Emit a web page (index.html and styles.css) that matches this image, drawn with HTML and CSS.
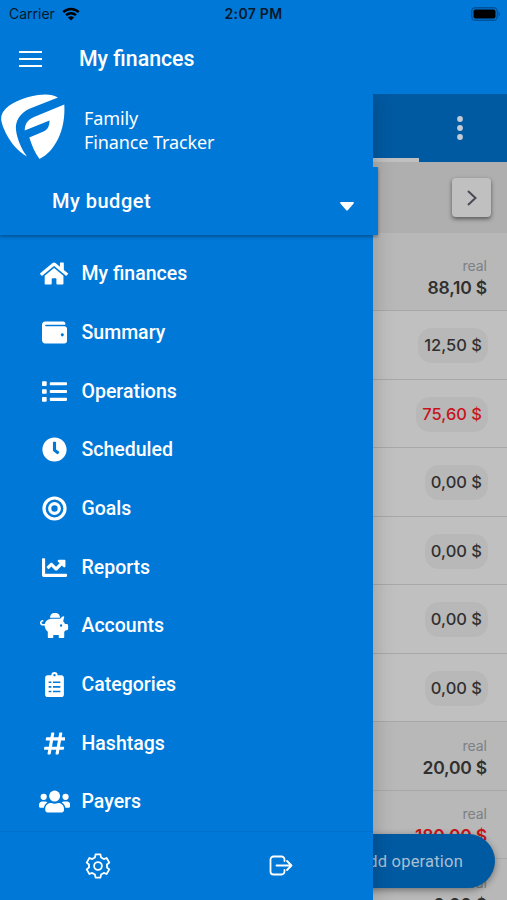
FILE: index.html
```html
<!DOCTYPE html>
<html lang="en">
<head>
  <meta charset="UTF-8" />
  <meta name="viewport" content="width=device-width, initial-scale=1.0"/>
  <title>My finances</title>
  <link rel="stylesheet" href="styles.css">
</head>
<body>
  <div class="status-bar">
    <div class="carrier">
      <span>Carrier</span>
      <svg class="wifi" viewBox="0 0 18 14"><path d="M1.3 5.2a10.8 10.8 0 0 1 15.4 0M4.1 8.2a6.9 6.9 0 0 1 9.8 0" fill="none" stroke="currentColor" stroke-width="2.5"/><path d="M9 13.5L5.9 10.5a4.4 4.4 0 0 1 6.2 0z"/></svg>
    </div>
    <span class="time">2:07 PM</span>
    <svg class="battery" viewBox="0 0 30 14"><rect x=".7" y=".7" width="25.6" height="12.6" rx="3.8" fill="none" stroke="#00539b" stroke-width="1.4"/><rect x="2.5" y="2.5" width="22" height="9" rx="2"/><path d="M27.5 4.7c2 .7 2 3.9 0 4.6z" fill="#00539b"/></svg>
  </div>

  <header>
    <svg class="burger" viewBox="0 0 24 16"><path d="M1 1.5h23M1 8.500h23M1 15.500h23" transform="translate(0 -.5)" stroke="currentColor" stroke-width="2"/></svg>
    <h1>My finances</h1>
  </header>

  <main>
    <div class="page">
      <div class="tabs">
        <div class="tab active"></div>
        <svg class="more" viewBox="0 0 6 24"><circle cx="3" cy="3" r="2.9"/><circle cx="3" cy="12" r="2.9"/><circle cx="3" cy="21" r="2.9"/></svg>
      </div>
      <div class="period">
        <button class="next"><svg viewBox="0 0 12 18"><path d="M2 2l7.5 7L2 16" fill="none" stroke="currentColor" stroke-width="2"/></svg></button>
      </div>
      <div class="row total first"><span class="label">real</span><span class="sum">88,10 $</span></div>
      <div class="row"><span class="chip">12,50 $</span></div>
      <div class="row"><span class="chip negative">75,60 $</span></div>
      <div class="row"><span class="chip">0,00 $</span></div>
      <div class="row"><span class="chip">0,00 $</span></div>
      <div class="row"><span class="chip">0,00 $</span></div>
      <div class="row"><span class="chip">0,00 $</span></div>
      <div class="row total"><span class="label">real</span><span class="sum">20,00 $</span></div>
      <div class="row total"><span class="label">real</span><span class="sum negative">180,00 $</span></div>
      <div class="row total"><span class="label">real</span><span class="sum">0,00 $</span></div>
    </div>

    <button class="add">Add operation</button>

    <aside class="drawer">
      <div class="brand">
        <svg class="logo" viewBox="0 0 66 66"><path d="M58 3.500C53 0 45 0 38 1 24 3 9 9 3 18c-3 5-2 10 1 17 5 12 13 22 23 27.500C22 56 17 45 16 36c-1-9 4-17 14-21.500z"/><path d="M64.300 10.500L34 23c-7 3-9 7-9.300 13.500L49.500 26.500c0 6-2 9-6 11L29.300 43.500C32 52 35 59 39.500 65c8-4 14-11 18.500-20 5-10 7-22 6.300-34.500z"/></svg>
        <div class="brand-name">Family<br>Finance Tracker</div>
      </div>

      <div class="budget">
        <span>My budget</span>
        <svg class="caret" viewBox="0 0 14 9"><path d="M1 0h12c1 0 1.200 1 .6 1.600L8 8c-.6.700-1.400.700-2 0L.4 1.600C-.2 1 0 0 1 0z"/></svg>
      </div>

      <nav>
        <a class="item">
          <svg class="icon" viewBox="0 0 576 512"><path d="M280.37 148.26L96 300.11V464a16 16 0 0 0 16 16l112.06-.29a16 16 0 0 0 15.92-16V368a16 16 0 0 1 16-16h64a16 16 0 0 1 16 16v95.64a16 16 0 0 0 16 16.050L464 480a16 16 0 0 0 16-16V300L295.67 148.26a12.190 12.190 0 0 0-15.300 0zM571.600 251.470L488 182.560V44.050a12 12 0 0 0-12-12h-56a12 12 0 0 0-12 12v72.610L318.470 43a48 48 0 0 0-61 0L4.340 251.470a12 12 0 0 0-1.600 16.900l25.500 31A12 12 0 0 0 45.150 301l235.220-193.740a12.190 12.190 0 0 1 15.300 0L530.900 301a12 12 0 0 0 16.900-1.600l25.500-31a12 12 0 0 0-1.700-16.930z"/></svg>
          <span>My finances</span>
        </a>
        <a class="item">
          <svg class="icon" viewBox="0 0 512 512"><path d="M461.200 128H80c-8.840 0-16-7.160-16-16s7.160-16 16-16h384c8.840 0 16-7.160 16-16 0-26.510-21.490-48-48-48H64C28.650 32 0 60.650 0 96v320c0 35.350 28.650 64 64 64h397.200c28.020 0 50.800-21.530 50.800-48V176c0-26.470-22.780-48-50.800-48zM416 336c-17.670 0-32-14.330-32-32s14.330-32 32-32 32 14.330 32 32-14.330 32-32 32z"/></svg>
          <span>Summary</span>
        </a>
        <a class="item">
          <svg class="icon" viewBox="0 0 512 512"><rect y="48" width="96" height="96" rx="16"/><rect y="208" width="96" height="96" rx="16"/><rect y="368" width="96" height="96" rx="16"/><rect x="160" y="64" width="352" height="64" rx="16"/><rect x="160" y="224" width="352" height="64" rx="16"/><rect x="160" y="384" width="352" height="64" rx="16"/></svg>
          <span>Operations</span>
        </a>
        <a class="item">
          <svg class="icon" viewBox="0 0 512 512"><path d="M256 8C119 8 8 119 8 256s111 248 248 248 248-111 248-248S393 8 256 8zm92.490 313l-20 25a16 16 0 0 1-22.490 2.500l-67-49.720a40 40 0 0 1-15-31.230V112a16 16 0 0 1 16-16h32a16 16 0 0 1 16 16v144l58 42.500a16 16 0 0 1 2.490 22.500z"/></svg>
          <span>Scheduled</span>
        </a>
        <a class="item">
          <svg class="icon" viewBox="0 0 512 512"><g fill="none" stroke="currentColor" stroke-width="66"><circle cx="256" cy="256" r="215"/><circle cx="256" cy="256" r="98"/></g></svg>
          <span>Goals</span>
        </a>
        <a class="item">
          <svg class="icon" viewBox="0 0 512 512"><path d="M496 384H64V80c0-8.840-7.160-16-16-16H16C7.160 64 0 71.160 0 80v336c0 17.670 14.330 32 32 32h464c8.840 0 16-7.160 16-16v-32c0-8.840-7.160-16-16-16zM464 96H345.940c-21.380 0-32.090 25.850-16.970 40.970l32.400 32.400L288 242.750l-73.370-73.370c-12.500-12.500-32.760-12.500-45.250 0l-68.690 68.690c-6.250 6.250-6.250 16.380 0 22.630l22.620 22.620c6.250 6.250 16.380 6.250 22.630 0L192 237.250l73.370 73.370c12.500 12.500 32.760 12.500 45.250 0l96-96 32.400 32.400c15.120 15.120 40.970 4.410 40.970-16.970V112c.010-8.840-7.150-16-15.990-16z"/></svg>
          <span>Reports</span>
        </a>
        <a class="item">
          <svg class="icon" viewBox="0 0 576 512"><path fill-rule="evenodd" d="M203 86a105 105 0 0 1 208-2c1 6-3 12-9 12H212c-6 0-10-4-9-10zM544 224h-31c-10-22-23-38-39-54l22-90c2-9-4-16-15-16-26 0-52 33-68 52H256c-77 0-141 35-157 108H56c-15 0-27-14-23-30 3-11 14-18 25-18 6 0 10-3 10-8v-16c0-6-4-8-8-8-30 0-56 21-60 51-4 34 23 61 56 61h40c0 52 25 98 64 127v113c0 9 7 16 16 16h80c9 0 16-7 16-16v-48h112v48c0 9 7 16 16 16h80c9 0 16-7 16-16V383c12-9 22-19 31-31h17c18 0 32-14 32-32v-64c0-18-14-32-32-32zM432 232a24 24 0 1 1 0 48 24 24 0 0 1 0-48z"/></svg>
          <span>Accounts</span>
        </a>
        <a class="item">
          <svg class="icon" viewBox="0 0 512 512"><path fill-rule="evenodd" d="M400 64h-80a64 64 0 0 0-128 0h-80c-26 0-48 22-48 48v352c0 26 22 48 48 48h288c26 0 48-22 48-48V112c0-26-22-48-48-48zM256 40a24 24 0 1 1 0 48 24 24 0 0 1 0-48zM136 192h56v32h-56zM224 192h152v32H224zM136 288h56v32h-56zM224 288h152v32H224zM136 384h56v32h-56zM224 384h152v32H224z"/></svg>
          <span>Categories</span>
        </a>
        <a class="item">
          <svg class="icon" viewBox="0 0 448 512"><path d="M440.667 182.109l7.143-40c1.313-7.355-4.342-14.109-11.813-14.109h-74.810l14.623-81.891C377.123 38.754 371.468 32 363.997 32h-40.632a12 12 0 0 0-11.813 9.891L296.175 128H197.540l14.623-81.891C213.477 38.754 207.822 32 200.350 32h-40.632a12 12 0 0 0-11.813 9.891L132.528 128H53.432a12 12 0 0 0-11.813 9.891l-7.143 40C33.163 185.246 38.818 192 46.289 192h74.810L98.242 320H19.146a12 12 0 0 0-11.813 9.891l-7.143 40C-1.123 377.246 4.532 384 12.003 384h74.810L72.190 465.891C70.877 473.246 76.532 480 84.003 480h40.632a12 12 0 0 0 11.813-9.891L151.826 384h98.634l-14.623 81.891C234.523 473.246 240.178 480 247.650 480h40.632a12 12 0 0 0 11.813-9.891L315.472 384h79.096a12 12 0 0 0 11.813-9.891l7.143-40c1.313-7.355-4.342-14.109-11.813-14.109h-74.810l22.857-128h79.096a12 12 0 0 0 11.813-9.891zM261.889 320h-98.634l22.857-128h98.634l-22.857 128z"/></svg>
          <span>Hashtags</span>
        </a>
        <a class="item">
          <svg class="icon" viewBox="0 0 640 512"><circle cx="96" cy="160" r="64"/><circle cx="544" cy="160" r="64"/><circle cx="320" cy="144" r="112"/><path d="M64 256h64c18 0 34 7 45 19-40 22-68 61-74 109H32c-18 0-32-14-32-32v-32c0-35 29-64 64-64zM576 256h-64c-18 0-34 7-45 19 40 22 68 61 74 109h67c18 0 32-14 32-32v-32c0-35-29-64-64-64zM243 288h8c42 20 96 20 138 0h8c64 0 115 52 115 115v29c0 27-21 48-48 48H176c-27 0-48-21-48-48v-29c0-63 51-115 115-115z"/></svg>
          <span>Payers</span>
        </a>
      </nav>

      <div class="drawer-footer">
        <svg class="settings" viewBox="0 0 26 26"><g fill="none" stroke="currentColor" stroke-width="1.800" stroke-linejoin="round"><path d="M10.600 1.400h4.800l.7 3.100 2.700 1.600 2.800-1.100 2.700 4.600-2.300 1.900v3l2.300 1.900-2.700 4.600-2.800-1.100-2.700 1.600-.7 3.100h-4.800l-.7-3.100-2.700-1.600L4.400 21l-2.700-4.600L4 14.500v-3L1.700 9.600 4.400 5l2.800 1.100 2.700-1.600z"/><circle cx="13" cy="13" r="3.900"/></g></svg>
        <svg class="logout" viewBox="0 0 24 22"><path d="M15.500 6V4.500a3 3 0 0 0-3-3h-8a3 3 0 0 0-3 3v12a3 3 0 0 0 3 3h8a3 3 0 0 0 3-3V15M7.500 10.500h14.500M18 6l4.500 4.500L18 15" fill="none" stroke="currentColor" stroke-width="1.800" stroke-linecap="round" stroke-linejoin="round"/></svg>
      </div>
    </aside>
  </main>
</body>
</html>
```

FILE: styles.css
```css
* {
  box-sizing: border-box;
}

body {
  margin: 0;
  height: 900px;
  display: flex;
  flex-direction: column;
  overflow: hidden;
  font-family: Roboto, sans-serif;
  background: #0078d8;
  color: #fff;
}

svg {
  display: block;
  fill: currentColor;
  flex-shrink: 0;
}

button {
  border: none;
  padding: 0;
  font-family: inherit;
}

.status-bar {
  height: 27px;
  padding: 0 6px 0 9px;
  display: grid;
  grid-template-columns: 1fr auto 1fr;
  align-items: center;
  font-family: Inter, sans-serif;
  font-size: 14px;
  color: #06182b;
}

.carrier {
  display: flex;
  align-items: center;
  gap: 7px;
}

.wifi {
  width: 18px;
  height: 14px;
  color: #000;
}

.time {
  margin-right: 3px;
  font-weight: 600;
  font-size: 14px;
  letter-spacing: 0.3px;
}

.battery {
  width: 30px;
  height: 14px;
  justify-self: end;
  color: #000;
}

header {
  height: 67px;
  padding: 0 18px 4px;
  display: flex;
  align-items: center;
  gap: 37px;
}

header h1 {
  margin: 0;
  font-size: 21.3px;
  font-weight: 500;
}

.burger {
  width: 24px;
  height: 16px;
}

main {
  position: relative;
  flex: 1;
  min-height: 0;
}

.page {
  height: 100%;
  overflow: hidden;
  background: #c0c0c0;
}

.tabs {
  height: 68px;
  padding-right: 44px;
  display: flex;
  align-items: center;
  justify-content: space-between;
  background: #005aa2;
  color: #c3ccd4;
}

.tab {
  width: 419px;
  height: 100%;
}

.tab.active {
  border-bottom: 4px solid #c0c0c0;
}

.more {
  width: 6px;
  height: 24px;
}

.period {
  height: 71px;
  padding-right: 16px;
  display: flex;
  align-items: center;
  justify-content: flex-end;
  background: #afafaf;
}

.next {
  width: 39px;
  height: 39px;
  display: flex;
  align-items: center;
  justify-content: center;
  background: #c0c0c0;
  border-radius: 4px;
  box-shadow: 0 2px 4px rgba(0, 0, 0, 0.5);
  color: #4a4a55;
}

.next svg {
  width: 12px;
  height: 18px;
}

.row {
  height: 68.5px;
  padding: 2px 20px 0 0;
  display: flex;
  flex-direction: column;
  align-items: flex-end;
  justify-content: center;
  border-bottom: 1.5px solid #a8a8a8;
  font-family: Inter, sans-serif;
  color: #303030;
}

.row.total {
  background: #b8b8b8;
}

.row.first {
  height: 78px;
  padding-top: 11px;
}

.label {
  font-size: 14px;
  line-height: 21px;
  color: #7b8184;
}

.sum {
  font-size: 17.5px;
  font-weight: 600;
  line-height: 23px;
  letter-spacing: -0.2px;
}

.chip {
  height: 35px;
  margin-right: -1px;
  padding: 0 6px;
  border-radius: 14px;
  background: #b8b8b8;
  font-size: 16.5px;
  font-weight: 500;
  line-height: 35px;
}

.negative {
  color: #c7141c;
}

.add {
  position: absolute;
  right: 12px;
  bottom: 12px;
  width: 184px;
  height: 54px;
  padding-right: 32px;
  border-radius: 27px;
  background: #005aa2;
  box-shadow: 0 2px 7px rgba(0, 0, 0, 0.4);
  color: #a9bfd3;
  font-size: 16.5px;
  letter-spacing: 0.2px;
  text-align: right;
}

.drawer {
  position: absolute;
  top: 0;
  bottom: 0;
  left: 0;
  width: 372.5px;
  display: flex;
  flex-direction: column;
  background: #0078d8;
  box-shadow: 0 3px 20px rgba(0, 0, 0, 0.22);
  clip-path: inset(0 -30px 0 0);
}

.brand {
  height: 73px;
  display: flex;
  align-items: flex-start;
  gap: 18px;
}

.logo {
  width: 66px;
  height: 66px;
}

.brand-name {
  padding-top: 12px;
  font-family: "Noto Sans", sans-serif;
  font-size: 18px;
  line-height: 24px;
  letter-spacing: -0.1px;
}

.budget {
  width: 378px;
  height: 69px;
  padding: 0 24px 0 52px;
  display: flex;
  align-items: center;
  justify-content: space-between;
  background: #0078d8;
  box-shadow: 0 2px 3px rgba(0, 0, 0, 0.3);
  clip-path: inset(0 -4px -6px 0);
  font-size: 20px;
  font-weight: 500;
  letter-spacing: 0.5px;
}

.caret {
  width: 14px;
  height: 9px;
  margin-top: 10px;
}

nav {
  flex: 1;
  padding-top: 9px;
}

.item {
  height: 58.7px;
  padding-left: 39px;
  display: grid;
  grid-template-columns: 31px 1fr;
  column-gap: 11.5px;
  align-items: center;
  font-size: 19.5px;
  font-weight: 500;
}

.icon {
  height: 25px;
  justify-self: center;
}

.drawer-footer {
  height: 69px;
  padding-left: 6px;
  display: grid;
  grid-template-columns: 1fr 1fr;
  align-items: center;
  justify-items: center;
  border-top: 1px solid #006fca;
}

.settings {
  width: 26px;
  height: 26px;
}

.logout {
  width: 24px;
  height: 22px;
}
```
